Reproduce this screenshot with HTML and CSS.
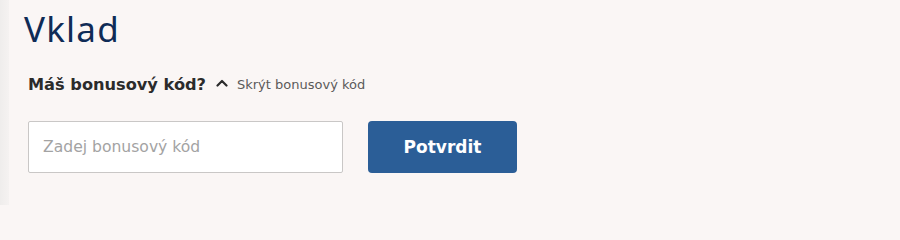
FILE: index.html
```html
<!DOCTYPE html>
<html lang="cs">
<head>
<meta charset="utf-8">
<link rel="stylesheet" href="styles.css">
</head>
<body>
<div class="page">
  <div class="edge"></div>
  <main class="content">
    <h1 class="title">Vklad</h1>
    <div class="bonus-row">
      <span class="bonus-q">Máš bonusový kód?</span>
      <svg class="chev" width="12" height="8" viewBox="0 0 12 8"><path d="M1.5 6.5 L6 2 L10.5 6.5" fill="none" stroke="#2b2b2b" stroke-width="2.2" stroke-linecap="round" stroke-linejoin="round"/></svg>
      <span class="bonus-hide">Skrýt bonusový kód</span>
    </div>
    <div class="form-row">
      <input class="code-input" type="text" placeholder="Zadej bonusový kód">
      <button class="btn">Potvrdit</button>
    </div>
  </main>
</div>
</body>
</html>
```
FILE: styles.css
```css
* { box-sizing: border-box; }
html, body { margin: 0; padding: 0; }
body {
  background: #faf6f5;
  font-family: "DejaVu Sans", "Noto Sans", sans-serif;
  width: 900px;
  height: 205px;
  overflow: hidden;
}
.page { display: flex; height: 205px; }
.edge {
  width: 9px;
  flex: none;
  background: linear-gradient(to right, #efedec, #f5f2f1);
}
.content { padding: 0 0 0 15px; flex: 1; }
.title {
  margin: 0;
  padding-top: 6px;
  font-family: "Noto Sans", sans-serif;
  font-weight: 400;
  font-size: 35px;
  line-height: 46px;
  color: #0f2b56;
  letter-spacing: 1.2px;
}
.bonus-row {
  display: flex;
  align-items: center;
  margin-top: 21px;
  padding-left: 4px;
  height: 22px;
}
.bonus-q {
  font-weight: 700;
  font-size: 16.2px;
  color: #2b2b2b;
}
.chev { margin-left: 10px; margin-right: 9px; margin-top: -2px; }
.bonus-hide {
  font-size: 13px;
  color: #5a5a5a;
}
.form-row {
  display: flex;
  margin-top: 26px;
  padding-left: 4px;
  gap: 25px;
}
.code-input {
  width: 315px;
  height: 52px;
  border: 1px solid #c9c7c6;
  border-radius: 2px;
  background: #fff;
  padding: 0 14px;
  font-family: "DejaVu Sans", "Noto Sans", sans-serif;
  font-size: 15.6px;
  color: #333;
  outline: none;
}
.code-input::placeholder { color: #a3a3a3; }
.btn {
  width: 149px;
  height: 52px;
  border: none;
  border-radius: 4px;
  background: #2b5e97;
  color: #fff;
  font-family: "DejaVu Sans", "Noto Sans", sans-serif;
  font-weight: 700;
  font-size: 17px;
  cursor: pointer;
}
```
